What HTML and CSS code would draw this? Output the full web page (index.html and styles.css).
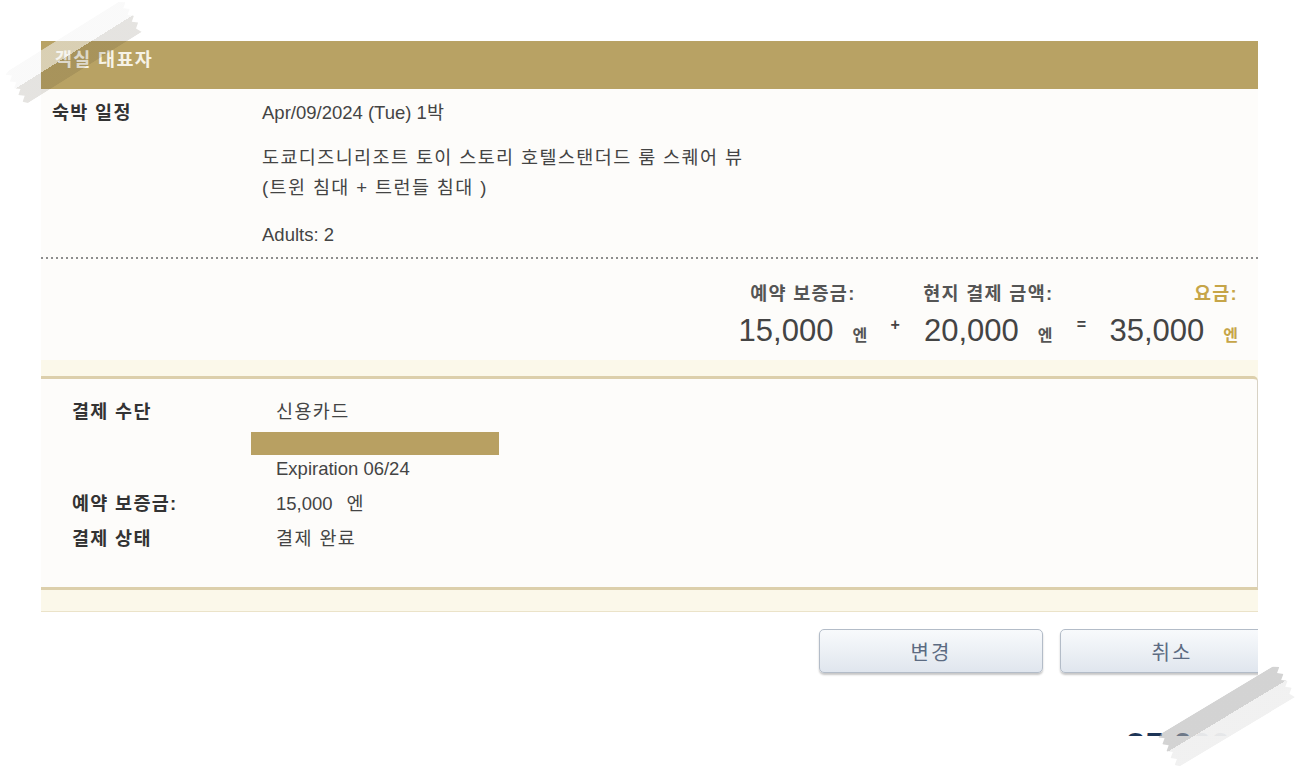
FILE: index.html
```html
<!DOCTYPE html>
<html lang="ko">
<head>
    <meta charset="UTF-8">
    <meta name="viewport" content="width=device-width, initial-scale=1.0">
    <title>예약 확인</title>
    <link rel="stylesheet" href="styles.css">
</head>
<body>
    <div class="sheet">
        <div class="room-head">객실 대표자</div>

        <div class="stay">
            <div class="stay-label">숙박 일정</div>
            <div class="stay-values">
                <p>Apr/09/2024 (Tue) 1박</p>
                <p class="ko">도쿄디즈니리조트 토이 스토리 호텔스탠더드 룸 스퀘어 뷰<br>(트윈 침대 + 트런들 침대 )</p>
                <p>Adults: 2</p>
            </div>
        </div>
        <div class="dots"></div>

        <div class="summary">
            <div class="sum-col">
                <div class="sum-label">예약 보증금:</div>
                <div class="sum-amount">15,000<span class="unit">엔</span></div>
            </div>
            <div class="op">+</div>
            <div class="sum-col">
                <div class="sum-label">현지 결제 금액:</div>
                <div class="sum-amount">20,000<span class="unit">엔</span></div>
            </div>
            <div class="op">=</div>
            <div class="sum-col total-col">
                <div class="sum-label">요금:</div>
                <div class="sum-amount">35,000<span class="unit">엔</span></div>
            </div>
        </div>

        <div class="pay-wrap">
            <div class="pay-box">
                <div class="pay-grid">
                    <div class="pay-label">결제 수단</div>
                    <div class="pay-value">
                        <div class="ko">신용카드</div>
                        <div class="card-mask"></div>
                        <div>Expiration 06/24</div>
                    </div>
                    <div class="pay-label">예약 보증금:</div>
                    <div class="pay-value">15,000<span class="pay-unit">엔</span></div>
                    <div class="pay-label">결제 상태</div>
                    <div class="pay-value ko">결제 완료</div>
                </div>
            </div>
        </div>

        <div class="actions">
            <button class="btn">변경</button>
            <button class="btn">취소</button>
        </div>

        <div class="grand-total">35,000</div>
    </div>

    <div class="tape tape-tl"></div>
    <div class="tape tape-br"></div>
</body>
</html>
```

FILE: styles.css
```css
body {
    position: relative;
    margin: 0;
    min-height: 772px;
    background-color: #fff;
    font-family: "Liberation Sans", "Noto Sans CJK KR", sans-serif;
    font-size: 18.5px;
    color: #444;
}

.ko {
    letter-spacing: 1.4px;
}

.sheet {
    width: 1217px;
    height: 695px;
    margin: 41px 0 0 41px;
    overflow: hidden;
}

/* header bar */
.room-head {
    box-sizing: border-box;
    height: 48px;
    padding: 8px 14px 0;
    line-height: 22px;
    font-weight: bold;
    letter-spacing: 1.3px;
    color: #f6f2e6;
    background-color: #b8a264;
}

/* stay block */
.stay {
    display: grid;
    grid-template-columns: 210px 1fr;
    padding: 9px 0 7px 11px;
    background-color: #fdfcfa;
}

.stay-label {
    line-height: 30px;
    font-weight: bold;
    letter-spacing: 1.3px;
    color: #333;
}

.stay-values p {
    margin: 0 0 15px;
    line-height: 30px;
}

.stay-values p:nth-child(2) {
    margin-bottom: 17px;
}

.stay-values p:last-child {
    margin-bottom: 0;
}

.dots {
    height: 2px;
    background: linear-gradient(to right, #8d8d8d 2px, transparent 2px) repeat-x;
    background-size: 5px 2px;
    background-color: #fdfcfa;
}

/* price summary */
.summary {
    box-sizing: border-box;
    display: flex;
    justify-content: flex-end;
    height: 101px;
    padding: 23px 20px 0 0;
    background-color: #fdfcfa;
}

.sum-col {
    text-align: center;
}

.sum-label {
    line-height: 24px;
    font-weight: bold;
    letter-spacing: 1.3px;
    color: #555;
}

.sum-amount {
    margin-top: 7px;
    line-height: 36px;
    font-size: 31px;
    color: #444;
    white-space: nowrap;
}

.unit {
    margin-left: 19px;
    font-size: 16px;
    font-weight: bold;
    color: #555;
}

.total-col {
    text-align: right;
}

.total-col .sum-label,
.total-col .unit {
    color: #c6a548;
}

.op {
    width: 56px;
    margin-top: 33px;
    line-height: 20px;
    text-align: center;
    font-size: 16px;
    font-weight: bold;
    color: #444;
}

/* payment box */
.pay-wrap {
    padding: 16px 0 21px;
    background-color: #fbf8ea;
    border-bottom: 1px solid #ebe3c9;
}

.pay-box {
    padding: 19px 0 34px 31px;
    background-color: #fdfcfa;
    border-top: 3px solid #dccfab;
    border-bottom: 3px solid #dccfab;
    border-right: 1px solid #d8d2c4;
    border-top-right-radius: 5px;
}

.pay-grid {
    display: grid;
    grid-template-columns: 204px 1fr;
    row-gap: 7px;
    line-height: 28px;
}

.pay-label {
    font-weight: bold;
    letter-spacing: 1.3px;
    color: #333;
}

.pay-unit {
    margin-left: 14px;
}

.card-mask {
    width: 248px;
    height: 23px;
    margin: 6px 0 0 -25px;
    background-color: #b8a062;
}

/* buttons */
.actions {
    display: flex;
    justify-content: flex-end;
    gap: 17px;
    margin: 17px -26px 0 0;
}

.btn {
    width: 224px;
    height: 44px;
    padding: 0;
    font-family: "Liberation Sans", "Noto Sans CJK KR", sans-serif;
    font-size: 20px;
    letter-spacing: 2px;
    color: #5c6b82;
    background: linear-gradient(#f8fafc, #e0e6ee);
    border: 1px solid #b3bcc8;
    border-radius: 5px;
    box-shadow: 0 2px 2px rgba(0,0,0,0.22);
}

.grand-total {
    margin-top: 54px;
    padding-right: 28px;
    text-align: right;
    line-height: 34px;
    font-size: 34px;
    font-weight: bold;
    color: #1d3557;
}

/* masking tape over the photo */
.tape {
    position: absolute;
    clip-path: polygon(5px 0, 134px 0, 140px 4px, 135px 8px, 140px 12px, 135px 16px, 140px 20px, 135px 24px, 140px 28px, 135px 32px, 138px 38px, 4px 38px, 0 34px, 5px 30px, 0 26px, 5px 22px, 0 18px, 5px 14px, 0 10px, 5px 6px, 0 2px);
}

.tape-tl {
    left: 4px;
    top: 33px;
    width: 140px;
    height: 38px;
    transform: rotate(-32deg);
    background: linear-gradient(to bottom, rgba(245,245,245,0.55) 0 50%, rgba(70,60,40,0.14) 50%);
}

.tape-br {
    left: 1157px;
    top: 697px;
    width: 140px;
    height: 38px;
    transform: rotate(-31deg);
    background: linear-gradient(to bottom, rgba(175,175,175,0.55) 0 50%, rgba(240,240,240,0.95) 50%);
}
```
